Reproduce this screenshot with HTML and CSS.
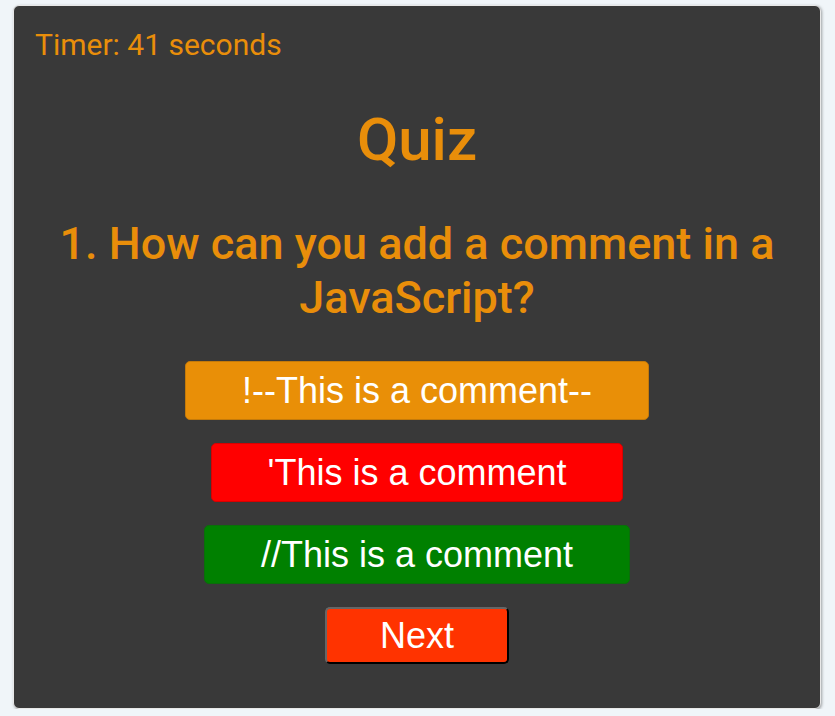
FILE: index.html
```html
<!DOCTYPE html>
<html>
<head>
<meta charset="utf-8">
<link rel="stylesheet" href="styles.css">
</head>
<body>
<div class="card">
  <div class="timer">Timer: 41 seconds</div>
  <h1 class="title">Quiz</h1>
  <h2 class="question">1. How can you add a comment in a JavaScript?</h2>
  <div class="answers">
    <button class="btn btn-orange">!--This is a comment--</button>
    <button class="btn btn-red">'This is a comment</button>
    <button class="btn btn-green">//This is a comment</button>
    <button class="btn btn-next">Next</button>
  </div>
</div>
</body>
</html>
```
FILE: styles.css
```css
html, body {
  margin: 0;
  padding: 0;
}
body {
  background: #f0f5f9;
  font-family: Roboto, "Liberation Sans", sans-serif;
}
.card {
  box-sizing: border-box;
  width: 808px;
  height: 704px;
  margin: 5px 0 0 13px;
  background: #393939;
  border: 1px solid #e8e8e8;
  border-radius: 6px;
  box-shadow: 1px 1px 3px rgba(0,0,0,0.35);
  padding: 21px 21px;
  color: #e98e0a;
}
.timer {
  font-size: 30px;
  line-height: 35px;
}
.title {
  text-align: center;
  font-size: 60px;
  font-weight: 500;
  margin: 42px 0 0;
  line-height: 72px;
}
.question {
  text-align: center;
  font-size: 45px;
  font-weight: 500;
  line-height: 54px;
  margin: 41px 0 0;
}
.answers {
  display: flex;
  flex-direction: column;
  align-items: center;
  gap: 23px;
  margin-top: 36px;
}
.btn {
  font-family: "Liberation Sans", Arial, sans-serif;
  font-size: 36px;
  color: #fff;
  padding: 8px 55.5px;
  border-radius: 5px;
  line-height: 41px;
  cursor: pointer;
}
.btn-orange {
  background: #e98f07;
  border: 1px solid #c47a0a;
}
.btn-red {
  background: #ff0000;
  border: 1px solid #d80000;
}
.btn-green {
  background: #008000;
  border: 1px solid #0a6e0a;
}
.btn-next {
  padding: 6px 52.5px;
  background: #ff3300;
  border: 2px solid #000;
  border-top-color: #666;
  border-left-color: #666;
}
```
